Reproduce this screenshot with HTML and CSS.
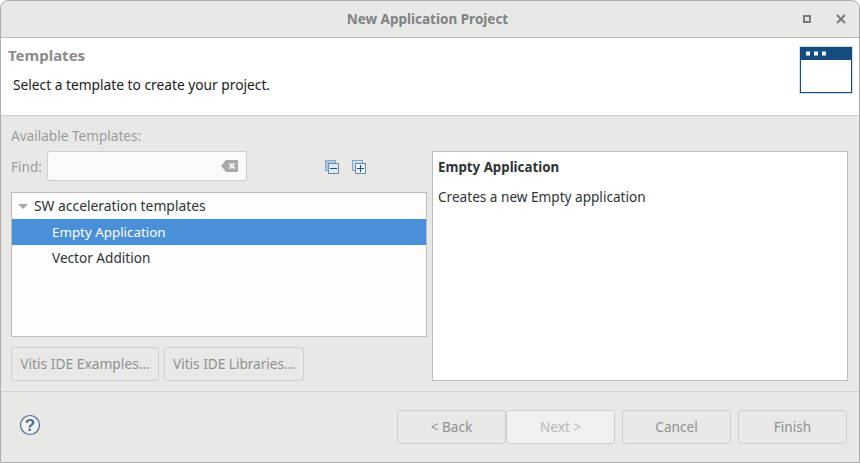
FILE: index.html
```html
<!DOCTYPE html>
<html lang="en">
<head>
    <meta charset="UTF-8">
    <title>New Application Project</title>
    <link rel="stylesheet" href="styles.css">
</head>
<body>
    <div class="window">
        <header class="titlebar">
            <span class="title">New Application Project</span>
            <div class="winbtns">
                <svg width="10" height="10" viewBox="0 0 10 10"><rect x="2" y="2" width="6" height="6" fill="none" stroke="#7b7b78" stroke-width="2"/></svg>
                <svg width="12" height="12" viewBox="0 0 12 12"><path d="M2 2l8 8M10 2l-8 8" stroke="#7b7b78" stroke-width="2"/></svg>
            </div>
        </header>

        <section class="banner">
            <div class="banner-text">
                <h1>Templates</h1>
                <p>Select a template to create your project.</p>
            </div>
            <svg class="banner-icon" width="54" height="48" viewBox="0 0 54 48">
                <rect x="0" y="0" width="54" height="48" fill="#cfdce9"/>
                <rect x="1" y="1" width="52" height="46" fill="#154c80"/>
                <rect x="2" y="14" width="50" height="32" fill="#fff"/>
                <rect x="7" y="5.5" width="4" height="4" fill="#fff"/>
                <rect x="15" y="5.5" width="4" height="4" fill="#fff"/>
                <rect x="23" y="5.5" width="4" height="4" fill="#fff"/>
            </svg>
        </section>

        <main class="content">
            <div class="left">
                <div class="avail">Available Templates:</div>
                <div class="find-row">
                    <label class="find-label">Find:</label>
                    <div class="find-input">
                        <svg width="17" height="12" viewBox="0 0 17 12"><path d="M5 0h12v12H5L0 6z" fill="#a9a9a7"/><path d="M8.5 3.5l5 5M13.5 3.5l-5 5" stroke="#f4f4f3" stroke-width="2"/></svg>
                    </div>
                    <div class="tree-tools">
                        <svg width="14" height="14" viewBox="0 0 14 14">
                            <rect x="0.5" y="0.5" width="10" height="10" fill="#a9cbe8" stroke="#86a5c4"/>
                            <rect x="3.5" y="3.5" width="10" height="10" fill="#dfeaf5" stroke="#6f88a6"/>
                            <path d="M5 8.5h7" stroke="#14508c" stroke-width="1.2"/>
                        </svg>
                        <svg width="14" height="14" viewBox="0 0 14 14">
                            <rect x="0.5" y="0.5" width="10" height="10" fill="#cfdfee" stroke="#86a5c4"/>
                            <rect x="3.5" y="3.5" width="10" height="10" fill="#f6f9fc" stroke="#6f88a6"/>
                            <path d="M5 8.5h7M8.5 5v7" stroke="#14508c" stroke-width="1.2"/>
                        </svg>
                    </div>
                </div>
                <div class="tree">
                    <div class="row group"><span class="arrow"></span>SW acceleration templates</div>
                    <div class="row child selected">Empty Application</div>
                    <div class="row child">Vector Addition</div>
                </div>
                <div class="lib-btns">
                    <button class="btn lib-examples">Vitis IDE Examples...</button>
                    <button class="btn lib-libraries">Vitis IDE Libraries...</button>
                </div>
            </div>
            <div class="details">
                <h2>Empty Application</h2>
                <p>Creates a new Empty application</p>
            </div>
        </main>

        <footer class="footer">
            <svg class="help" width="22" height="22" viewBox="0 0 22 22">
                <circle cx="11" cy="11" r="9.5" fill="#f1f3f6" stroke="#4f6a93" stroke-width="1.2"/>
                <text x="11" y="17" text-anchor="middle" class="help-q">?</text>
            </svg>
            <div class="nav-btns">
                <button class="btn nav">&lt; Back</button>
                <button class="btn nav next">Next &gt;</button>
                <button class="btn nav cancel">Cancel</button>
                <button class="btn nav finish">Finish</button>
            </div>
        </footer>
    </div>
</body>
</html>
```

FILE: styles.css
```css
html, body {
    margin: 0;
    padding: 0;
    background: #fff;
}

.window {
    box-sizing: border-box;
    width: 860px;
    height: 463px;
    display: flex;
    flex-direction: column;
    background: #e8e8e7;
    border: 1px solid #aeaeac;
    border-radius: 8px 8px 0 0;
    font-family: "Noto Sans", sans-serif;
    font-size: 13.6px;
    color: #2e3436;
    overflow: hidden;
}

.titlebar {
    height: 36px;
    flex: none;
    display: flex;
    align-items: center;
    justify-content: center;
    position: relative;
    border-bottom: 1px solid #b9b9b7;
}

.title {
    margin-right: 5px;
    font-size: 13.5px;
    font-weight: 700;
    color: #7f8283;
}

.winbtns {
    position: absolute;
    right: 12px;
    top: 12px;
    display: flex;
    align-items: center;
    gap: 23px;
}

.winbtns svg {
    display: block;
}

.banner {
    height: 77px;
    flex: none;
    background: #fff;
    border-bottom: 1px solid #cfcfcd;
    display: flex;
    justify-content: space-between;
}

.banner h1 {
    margin: 0;
    padding: 7px 0 0 7px;
    font-size: 15px;
    line-height: 20px;
    font-weight: 700;
    color: #8a8c8c;
}

.banner p {
    margin: 10px 0 0 12px;
    font-size: 13.75px;
    line-height: 20px;
    color: #1a1a1a;
}

.banner-icon {
    margin: 8px 6px 0 0;
}

.content {
    height: 276px;
    flex: none;
    box-sizing: border-box;
    border-bottom: 1px solid #d3d3d1;
    display: flex;
    gap: 5px;
    padding-left: 10px;
}

.left {
    width: 416px;
}

.avail {
    margin-top: 10px;
    line-height: 20px;
    color: #9a9c9c;
}

.find-row {
    display: flex;
    align-items: center;
    margin-top: 5px;
    height: 30px;
}

.find-label {
    width: 36px;
    color: #9a9c9c;
}

.find-input {
    box-sizing: border-box;
    width: 200px;
    height: 30px;
    background: #fafafa;
    border: 1px solid #cdcdcb;
    border-radius: 3px;
    display: flex;
    align-items: center;
    justify-content: flex-end;
    padding-right: 8px;
}

.find-input svg {
    display: block;
}

.tree-tools {
    margin: 2px 0 0 78px;
    display: flex;
    gap: 13px;
}

.tree-tools svg {
    display: block;
}

.tree {
    box-sizing: border-box;
    height: 145px;
    margin-top: 11px;
    background: #fdfdfd;
    border: 1px solid #bcbcba;
}

.row {
    height: 26px;
    line-height: 26px;
    white-space: nowrap;
}

.group {
    display: flex;
    align-items: center;
    padding-left: 6px;
    font-size: 13.85px;
}

.arrow {
    width: 0;
    height: 0;
    border-left: 5px solid transparent;
    border-right: 5px solid transparent;
    border-top: 5px solid #a9a9a7;
    margin-right: 6px;
}

.child {
    padding-left: 40px;
}

.selected {
    background: #4a90d9;
    color: #fff;
    font-size: 13.35px;
}

.lib-btns {
    display: flex;
    gap: 5px;
    margin-top: 10px;
}

.btn {
    box-sizing: border-box;
    height: 34px;
    padding: 0 0 2px;
    background: #e8e8e7;
    border: 1px solid #cdcdcb;
    border-radius: 3px;
    font-family: inherit;
    font-size: 13.6px;
    color: #8f9191;
}

.lib-examples {
    width: 148px;
    font-size: 13.8px;
}

.lib-libraries {
    width: 140px;
}

.details {
    box-sizing: border-box;
    width: 416px;
    height: 230px;
    margin-top: 35px;
    background: #fff;
    border: 1px solid #bcbcba;
    padding: 5px;
}

.details h2 {
    margin: 0;
    font-size: 13.3px;
    line-height: 20px;
    font-weight: 700;
    color: #2e3436;
}

.details p {
    margin: 10px 0 0;
    line-height: 20px;
}

.footer {
    flex: 1;
    display: flex;
    align-items: flex-start;
    justify-content: space-between;
    padding: 18px 12px 0 18px;
}

.help {
    margin-top: 4px;
}

.help-q {
    font-family: "Liberation Sans", sans-serif;
    font-size: 17px;
    font-weight: 700;
    fill: #4f6a93;
}

.nav-btns {
    display: flex;
}

.nav {
    width: 109px;
    margin-left: 7px;
}

.nav.next {
    margin-left: 0;
    background: #f0f0ef;
    color: #b6b8b8;
}
```
